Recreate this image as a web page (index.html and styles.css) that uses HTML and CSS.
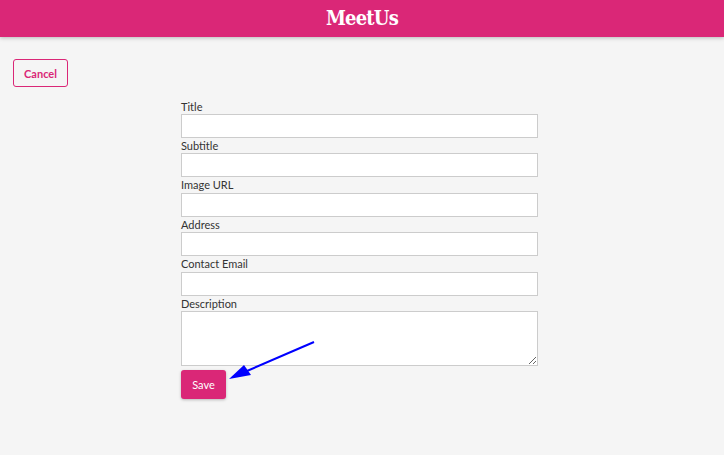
FILE: index.html
```html
<!DOCTYPE html>
<html>
<head>
<meta charset="utf-8">
<link rel="stylesheet" href="styles.css">
</head>
<body>
<header class="topbar"><h1 class="brand">MeetUs</h1></header>
<main class="page">
  <div class="actions"><button class="btn-outline">Cancel</button></div>
  <form class="form">
    <label class="field-label">Title</label>
    <input class="field-input" type="text">
    <label class="field-label">Subtitle</label>
    <input class="field-input" type="text">
    <label class="field-label">Image URL</label>
    <input class="field-input" type="text">
    <label class="field-label">Address</label>
    <input class="field-input" type="text">
    <label class="field-label">Contact Email</label>
    <input class="field-input" type="text">
    <label class="field-label">Description</label>
    <textarea class="field-area"></textarea>
    <div class="submit-row"><button class="btn-primary" type="button">Save</button></div>
  </form>
</main>
<svg class="annot" width="724" height="455" viewBox="0 0 724 455">
  <line x1="314" y1="342" x2="240" y2="374" stroke="#0000ff" stroke-width="2"/>
  <polygon points="229,379 244,365 251,375" fill="#0000ff"/>
</svg>
</body>
</html>
```
FILE: styles.css
```css
html, body {
  margin: 0;
  padding: 0;
  background: #f5f5f5;
  font-family: Lato, "Liberation Sans", sans-serif;
  height: 100%;
  overflow: hidden;
}
.topbar {
  height: 37px;
  background: #da2777;
  box-shadow: 0 1px 4px rgba(0,0,0,0.25);
  display: flex;
  align-items: center;
  justify-content: center;
}
.brand {
  margin: 0 0 1px 0;
  color: #fff;
  font-family: "DejaVu Serif Condensed", "DejaVu Serif", serif;
  font-stretch: condensed;
  font-weight: bold;
  font-size: 20px;
  letter-spacing: -0.8px;
}
.page {
  padding: 22px 0 0 13px;
}
.actions {
  height: 28px;
}
.btn-outline {
  height: 28px;
  width: 55px;
  padding: 0;
  border: 1px solid #da2777;
  border-radius: 3px;
  background: transparent;
  color: #da2777;
  font-family: Lato, sans-serif;
  font-size: 11px;
  font-weight: bold;
}
.form {
  margin: 11.6px 0 0 168px;
  width: 357px;
  display: flex;
  flex-direction: column;
  align-items: flex-start;
}
.field-label {
  display: block;
  font-size: 11px;
  line-height: 15.4px;
  height: 15.4px;
  color: #333;
}
.field-input {
  box-sizing: border-box;
  width: 357px;
  height: 24px;
  margin: 0;
  border: 1px solid #ccc;
  background: #fff;
}
.field-area {
  box-sizing: border-box;
  width: 357px;
  height: 55px;
  margin: 0;
  border: 1px solid #ccc;
  background: #fff;
}
.submit-row {
  margin-top: 4px;
}
.btn-primary {
  height: 29px;
  width: 45px;
  padding: 0;
  border: none;
  border-radius: 3px;
  background: #da2777;
  color: #fff;
  font-family: Lato, sans-serif;
  font-size: 11px;
  box-shadow: 0 1px 3px rgba(0,0,0,0.25);
}
.annot {
  position: absolute;
  left: 0;
  top: 0;
  pointer-events: none;
}
```
